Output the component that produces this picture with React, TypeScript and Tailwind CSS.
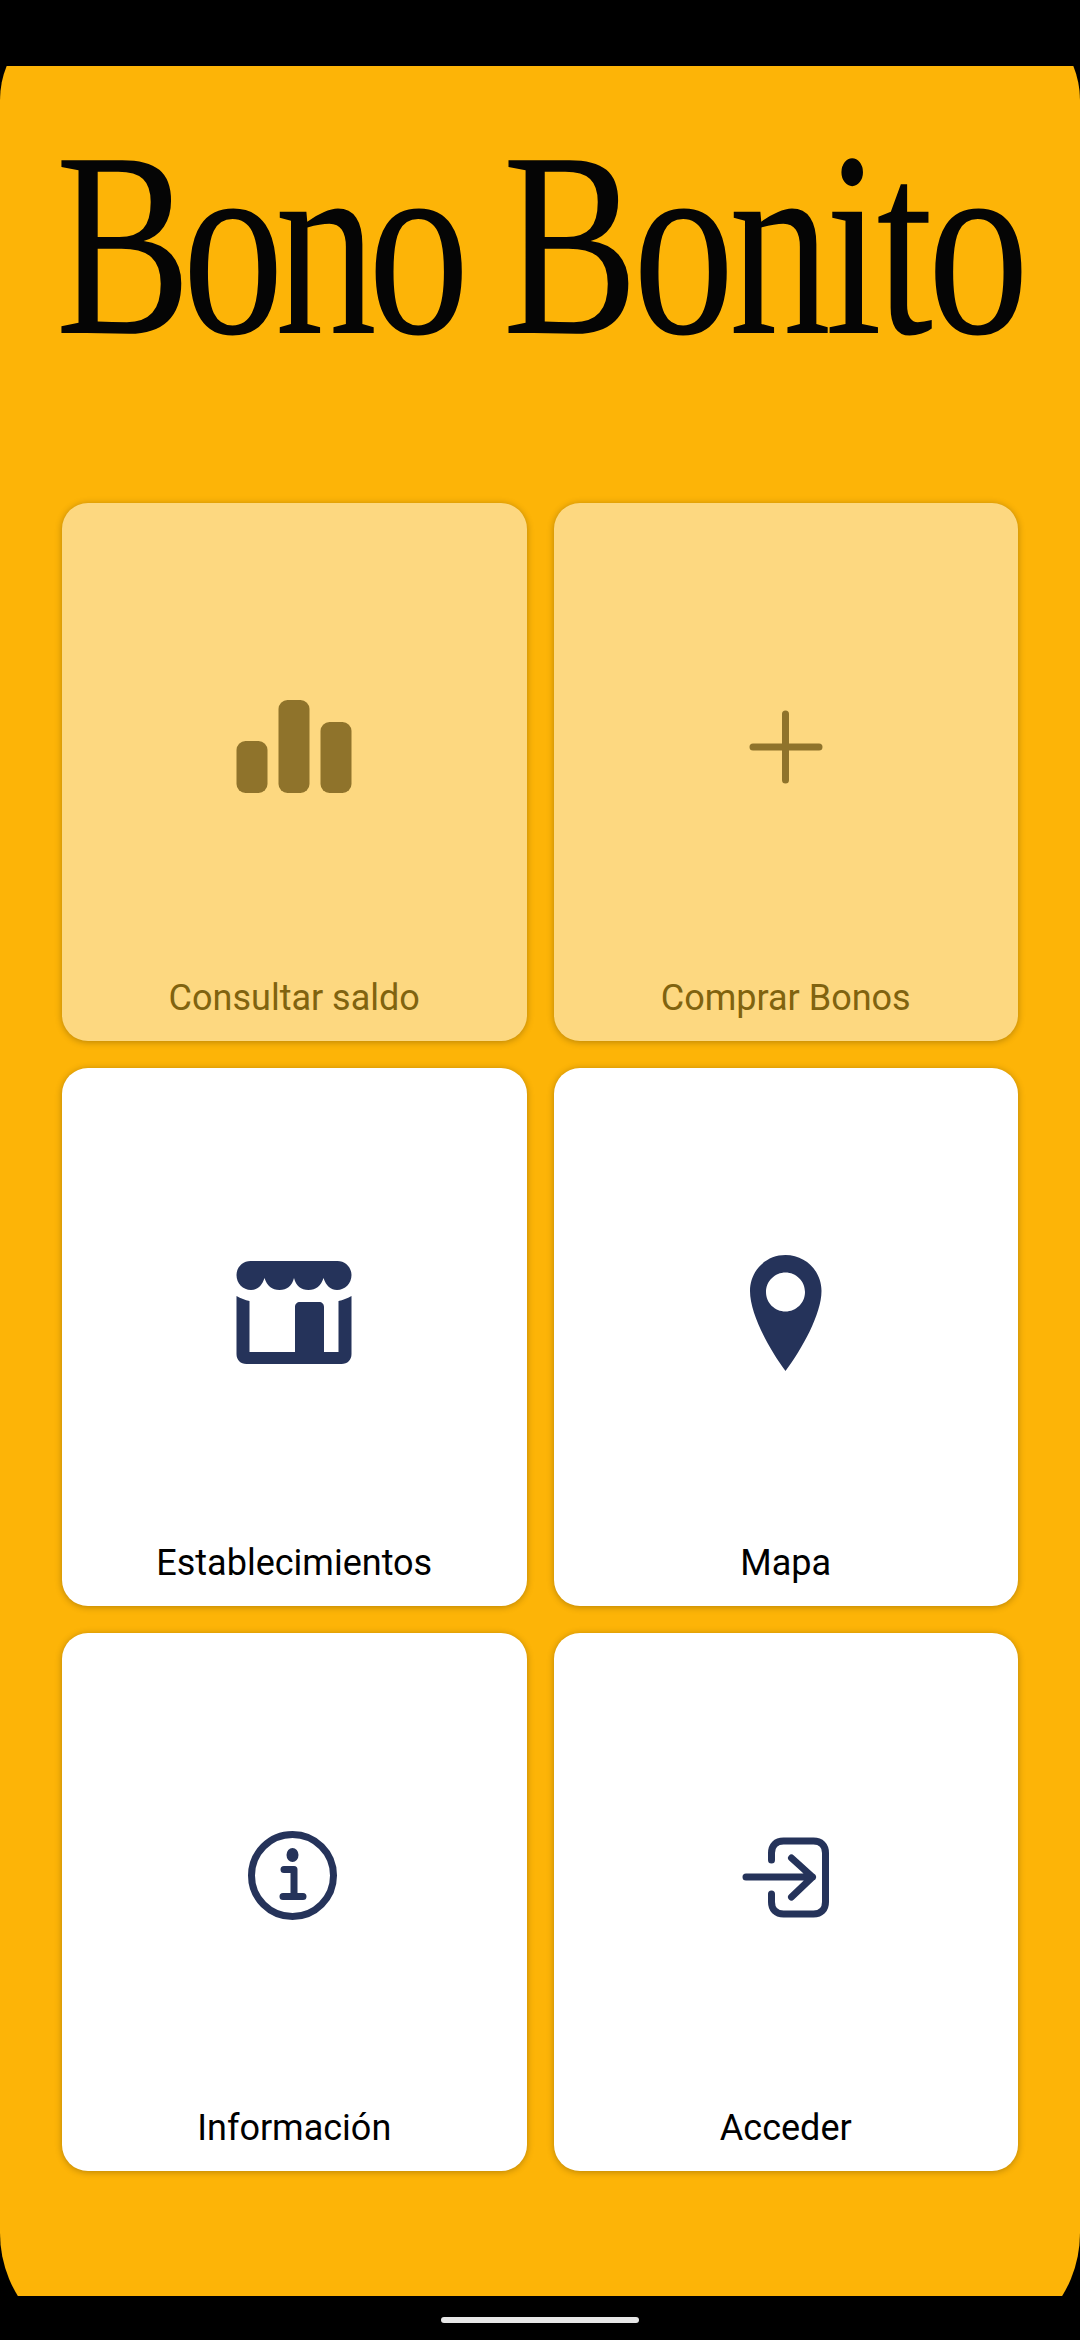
const BarsIcon = () => (
  <svg width="120" height="120" viewBox="0 0 120 120" fill="#8f732b">
    <rect x="2.500" y="54" width="31" height="52" rx="9" />
    <rect x="44.500" y="13" width="31" height="93" rx="9" />
    <rect x="86.500" y="35" width="31" height="71" rx="9" />
  </svg>
);

const PlusIcon = () => (
  <svg width="120" height="120" viewBox="0 0 120 120" fill="none" stroke="#8f732b" strokeWidth="7" strokeLinecap="round">
    <path d="M27 60H93M59.500 27V93" />
  </svg>
);

const StoreIcon = () => (
  <svg width="120" height="120" viewBox="0 0 120 120" fill="#25335a">
    <path d="M16.500 9H103.500C111 9 117.500 15 117.500 23C117.500 31.500 111 38 103 38C97 38 92 34 89.500 26C87 34 82 38 74.500 38C67 38 62 34 60 26C58 34 53 38 45.500 38C38 38 33 34 30.500 26C28 34 23 38 17 38C9 38 2.500 31.500 2.500 23C2.500 15 9 9 16.500 9Z" />
    <path d="M2.500 44C7 46.500 11 48 15.500 49V100H61V55C61 52 63 50 66 50H85C88 50 90 52 90 55V100H104.500V49C109 48 113 46.500 117.500 44V102C117.500 108 113.500 112 107.500 112H12.500C6.500 112 2.500 108 2.500 102Z" />
  </svg>
);

const PinIcon = () => (
  <svg width="120" height="120" viewBox="0 0 120 120" fill="#25335a">
    <path
      fillRule="evenodd"
      d="M59.500 3C79.500 3 95.500 19 95.500 39C95.500 62 76 97 59.500 119C43 97 24 62 24 39C24 19 39.500 3 59.500 3ZM59.500 20.500C49 20.500 40 29 40 40C40 51 49 59.500 59.500 59.500C70 59.500 79 51 79 40C79 29 70 20.500 59.500 20.500Z"
    />
  </svg>
);

const InfoIcon = () => (
  <svg width="120" height="120" viewBox="0 0 120 120" fill="none" stroke="#25335a" strokeWidth="7" strokeLinecap="round" strokeLinejoin="round">
    <circle cx="58.500" cy="58.500" r="41" />
    <ellipse cx="58.500" cy="38" rx="6" ry="7" fill="#25335a" stroke="none" />
    <path d="M50 52.500H60V79.500M49 79.500H69" />
  </svg>
);

const LoginIcon = () => (
  <svg width="120" height="120" viewBox="0 0 120 120" fill="none" stroke="#25335a" strokeWidth="7" strokeLinecap="round" strokeLinejoin="round">
    <path d="M45.500 43V36C45.500 28.500 50 24 57.500 24H87.500C95 24 99.500 28.500 99.500 36V85C99.500 92.500 95 97 87.500 97H57.500C50 97 45.500 92.500 45.500 85V77" />
    <path d="M20 60H86.500M65.500 41L86.500 60L65.500 80" />
  </svg>
);

const items = [
  { label: "Consultar saldo", icon: <BarsIcon />, muted: true },
  { label: "Comprar Bonos", icon: <PlusIcon />, muted: true },
  { label: "Establecimientos", icon: <StoreIcon />, muted: false },
  { label: "Mapa", icon: <PinIcon />, muted: false },
  { label: "Información", icon: <InfoIcon />, muted: false },
  { label: "Acceder", icon: <LoginIcon />, muted: false },
];

const App = () => {
  return (
    <div className="flex h-[2340px] w-[1080px] flex-col overflow-hidden bg-black font-['Roboto',sans-serif]">
      <div className="h-[66px] shrink-0 bg-black" />

      <main className="h-[2230px] shrink-0 overflow-hidden">
        <div className="-mt-[56px] h-[2343px] rounded-t-[90px] rounded-b-[120px] bg-[#fdb407] pt-[102px]">
          <div className="flex h-[264px] justify-center">
            <h1 className="scale-x-[0.77] whitespace-nowrap font-['Liberation_Serif',serif] text-[264px] leading-none font-normal text-[#050505]">
              <span className="tracking-[-11.500px]">Bono </span>
              <span className="tracking-[-7px]">Bonito</span>
            </h1>
          </div>

          <div className="mt-[127px] grid grid-cols-2 gap-x-[27px] gap-y-[27px] px-[62px]">
            {items.map((item) => (
              <div
                key={item.label}
                className={
                  item.muted
                    ? "flex h-[538px] flex-col rounded-[26px] bg-[#fdd880] shadow-[0_1px_7px_rgba(0,0,0,0.28)]"
                    : "flex h-[538px] flex-col rounded-[26px] bg-white shadow-[0_1px_7px_rgba(0,0,0,0.28)]"
                }
              >
                <div className="flex h-[476px] items-center justify-center pt-3">{item.icon}</div>
                <p
                  className={
                    item.muted
                      ? "h-[34px] text-center text-[36px] leading-[38px] text-[#80630f]"
                      : "h-[34px] text-center text-[36px] leading-[38px] text-black"
                  }
                >
                  {item.label}
                </p>
              </div>
            ))}
          </div>
        </div>
      </main>

      <div className="flex flex-1 justify-center bg-black pt-[21px]">
        <div className="h-[6px] w-[198px] rounded-full bg-[#e6e6e6]" />
      </div>
    </div>
  );
};

export default App;
